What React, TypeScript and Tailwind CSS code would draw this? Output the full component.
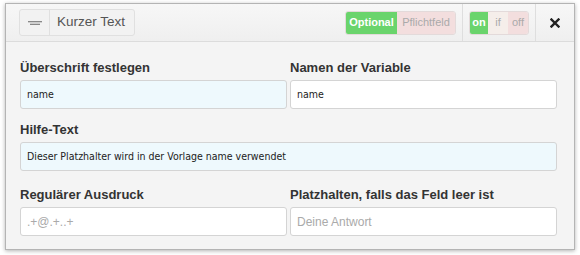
import React from "react";

const Field = ({
  label,
  value,
  placeholder,
  tinted,
}: {
  label: string;
  value?: string;
  placeholder?: string;
  tinted?: boolean;
}) => {
  return (
    <div className="flex flex-col">
      <div className="h-[18px] text-[13px] leading-[18px] font-bold text-[#333]">
        {label}
      </div>
      <div
        className={
          "mt-[3px] flex h-[29px] items-center rounded-[3px] border border-[#d4d4d4] px-[6px] " +
          (tinted ? "bg-[#eef9fd]" : "bg-white")
        }
      >
        {value ? (
          <span className="font-['DejaVu_Sans_Condensed','DejaVu_Sans',sans-serif] text-[10.5px] text-[#222]">
            {value}
          </span>
        ) : (
          <span className="text-[12px] text-[#aaa]">{placeholder}</span>
        )}
      </div>
    </div>
  );
};

export default function App() {
  return (
    <div className="h-[255px] w-[580px] bg-white pl-[5px] pt-[3px] font-['Liberation_Sans',Arial,sans-serif]">
      <div className="h-[247px] w-[570px] border border-[#b4b4b4] bg-[#f4f4f4] shadow-[0_1px_4px_rgba(0,0,0,0.3)]">
        {/* header */}
        <div className="flex h-[38px] items-center border-b border-[#dcdcdc] bg-gradient-to-b from-[#f7f7f7] to-[#efefef] pl-[13px]">
          <div className="flex h-[27px] items-center rounded-[3px] border border-[#e0e0e0] bg-[#f2f2f2]">
            <div className="flex h-full w-[30px] items-center justify-center border-r border-[#e0e0e0]">
              <svg width="16" height="4" viewBox="0 0 16 4">
                <line x1="1" y1="0.75" x2="15" y2="0.75" stroke="#666" strokeWidth="1" />
                <line x1="3" y1="3.25" x2="13" y2="3.25" stroke="#666" strokeWidth="1" />
              </svg>
            </div>
            <div className="pl-[7px] pr-[9px] text-[13.5px] text-[#555]">Kurzer Text</div>
          </div>
          <div className="flex-1" />
          <div className="flex h-full items-center pr-[6px]">
            <div className="flex h-[24px] overflow-hidden rounded-[3px] border border-[#e3dada] text-[11px]">
              <div className="flex w-[51px] items-center justify-center bg-[#6ad46c] font-bold text-white">
                Optional
              </div>
              <div className="flex w-[58px] items-center justify-center bg-[#f3dede] text-[#aaa]">
                Pflichtfeld
              </div>
            </div>
          </div>
          <div className="flex h-full items-center border-l border-[#dedede] px-[6px]">
            <div className="flex h-[24px] overflow-hidden rounded-[3px] border border-[#e3dada] text-[11px]">
              <div className="flex w-[18px] items-center justify-center bg-[#6ad46c] font-bold text-white">
                on
              </div>
              <div className="flex w-[20px] items-center justify-center bg-[#f5eeea] text-[#aaa]">
                if
              </div>
              <div className="flex w-[20px] items-center justify-center bg-[#f3dede] text-[#aaa]">
                off
              </div>
            </div>
          </div>
          <div className="flex h-full w-[39px] items-center justify-center border-l border-[#dedede]">
            <svg width="10" height="10" viewBox="0 0 10 10">
              <path d="M1.5 1.5 L8.5 8.5 M8.5 1.5 L1.5 8.5" stroke="#222" strokeWidth="2.4" strokeLinecap="square" />
            </svg>
          </div>
        </div>
        {/* body */}
        <div className="flex flex-col pl-[14px] pr-[17px] pt-[17px]">
          <div className="grid grid-cols-2 gap-[3px]">
            <Field label="Überschrift festlegen" value="name" tinted />
            <Field label="Namen der Variable" value="name" />
          </div>
          <div className="mt-[12px]">
            <Field
              label="Hilfe-Text"
              value="Dieser Platzhalter wird in der Vorlage name verwendet"
              tinted
            />
          </div>
          <div className="mt-[15px] grid grid-cols-2 gap-[3px]">
            <Field label="Regulärer Ausdruck" placeholder=".+@.+..+" />
            <Field label="Platzhalten, falls das Feld leer ist" placeholder="Deine Antwort" />
          </div>
        </div>
      </div>
    </div>
  );
}
